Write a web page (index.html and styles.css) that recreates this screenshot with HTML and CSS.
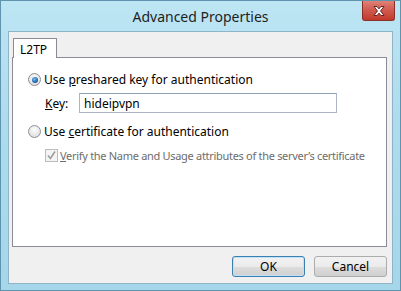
FILE: index.html
```html
<!DOCTYPE html>
<html lang="en">

<head>
	<meta charset="UTF-8">
	<title>Advanced Properties</title>
	<link rel="stylesheet" href="styles.css">
</head>

<body>
	<div class="window">
		<div class="titlebar">
			<span class="title">Advanced Properties</span>
			<button class="close" aria-label="Close">
				<svg width="12" height="10" viewBox="0 0 12 10">
					<path d="M1 0.5h3l2 2.4 2-2.4h3l-3.5 4.5 3.5 4.5h-3l-2-2.4-2 2.4h-3l3.5-4.5z" fill="#fff" stroke="#5a1a14" stroke-width="0.9" stroke-linejoin="round"/>
				</svg>
			</button>
		</div>
		<div class="client">
			<div class="tabs">
				<div class="tab">L2TP</div>
			</div>
			<div class="panel">
				<div class="option">
					<span class="radio checked"></span>
					<span>Use <u>p</u>reshared key for authentication</span>
				</div>
				<div class="key-row">
					<label for="key"><u>K</u>ey:</label>
					<div class="field" id="key">hideipvpn</div>
				</div>
				<div class="option second">
					<span class="radio"></span>
					<span>Use <u>c</u>ertificate for authentication</span>
				</div>
				<div class="option sub disabled">
					<span class="check">
						<svg width="11" height="11" viewBox="0 0 11 11">
							<path d="M2 5.5l2.4 3 4.6-7" fill="none" stroke="#9c9c9c" stroke-width="1.6"/>
						</svg>
					</span>
					<span><u>V</u>erify the Name and Usage attributes of the server’s certificate</span>
				</div>
			</div>
			<div class="actions">
				<button class="btn default">OK</button>
				<button class="btn">Cancel</button>
			</div>
		</div>
	</div>
</body>

</html>
```

FILE: styles.css
```css
body {
	margin: 0;
	font-family: "Noto Sans", "Open Sans", sans-serif;
	font-size: 12px;
	color: #000;
}

.window {
	width: 401px;
	height: 291px;
	box-sizing: border-box;
	display: flex;
	flex-direction: column;
	padding: 0 7px 6px 7px;
	border: 1px solid #5f94ae;
	background: linear-gradient(180deg, #bde5f4 0%, #aedcee 40%, #a6d6ea 100%);
}

.titlebar {
	position: relative;
	height: 30px;
	display: flex;
	align-items: center;
	justify-content: center;
}

.title {
	font-size: 14px;
	color: #1e1e1e;
	margin-top: 1px;
}

.close {
	position: absolute;
	top: 0;
	right: -2px;
	width: 33px;
	height: 20px;
	padding: 0;
	border: 1px solid #8a3028;
	border-top: none;
	border-radius: 0 0 3px 3px;
	background: linear-gradient(180deg, #e08276 0%, #d15c50 45%, #c2392d 100%);
	display: flex;
	align-items: center;
	justify-content: center;
}

.client {
	flex: 1;
	display: flex;
	flex-direction: column;
	padding: 6px 5px 6px 3px;
	background: #f0f0f0;
	border: 1px solid #8fb4c7;
}

.tabs {
	display: flex;
	padding-left: 1px;
}

.tab {
	position: relative;
	z-index: 1;
	width: 44px;
	height: 20px;
	margin-bottom: -1px;
	box-sizing: border-box;
	padding: 2px 0 0 6px;
	background: #fff;
	border: 1px solid #898c95;
	border-bottom: none;
}

.panel {
	flex: 1;
	display: flex;
	flex-direction: column;
	padding: 15px 0 0 15px;
	background: #fff;
	border: 1px solid #898c95;
}

.option {
	display: flex;
	align-items: center;
	gap: 3px;
	height: 13px;
	white-space: nowrap;
}

.option.second {
	margin-top: 12px;
}

.option.sub {
	margin-top: 11px;
	padding-left: 17px;
	gap: 2px;
	font-size: 11px;
	letter-spacing: -0.3px;
}

.disabled {
	color: #6d6d6d;
}

.radio {
	flex: none;
	width: 11px;
	height: 11px;
	border-radius: 50%;
	border: 1px solid #8a8f97;
	background: radial-gradient(circle at 50% 35%, #fdfdfd 0%, #e6e6e6 60%, #d4d4d4 100%);
	display: flex;
	align-items: center;
	justify-content: center;
}

.radio.checked::after {
	content: "";
	width: 6px;
	height: 6px;
	border-radius: 50%;
	background: radial-gradient(circle at 40% 35%, #7fc0f0 0%, #2a74b8 50%, #123f72 100%);
}

.check {
	flex: none;
	width: 11px;
	height: 11px;
	border: 1px solid #bcbcbc;
	background: #f4f4f4;
	display: flex;
	align-items: center;
	justify-content: center;
}

.key-row {
	display: flex;
	align-items: center;
	margin-top: 7px;
	padding-left: 17px;
}

.key-row label {
	width: 34px;
}

.field {
	width: 258px;
	height: 20px;
	box-sizing: border-box;
	padding: 1px 0 0 4px;
	border: 1px solid #abb6c4;
	border-top-color: #8fa3b8;
	background: #fff;
	display: flex;
	align-items: center;
}

.actions {
	display: flex;
	justify-content: flex-end;
	gap: 9px;
	margin-top: 9px;
}

.btn {
	width: 73px;
	height: 21px;
	padding: 0;
	font-family: inherit;
	font-size: 12px;
	color: #000;
	border: 1px solid #acacac;
	border-radius: 3px;
	background: linear-gradient(180deg, #f2f2f2 0%, #ebebeb 50%, #dddddd 51%, #cfcfcf 100%);
}

.btn.default {
	border-color: #3c7fb1;
	box-shadow: inset 0 0 0 1px #bfe2f7;
}
```
